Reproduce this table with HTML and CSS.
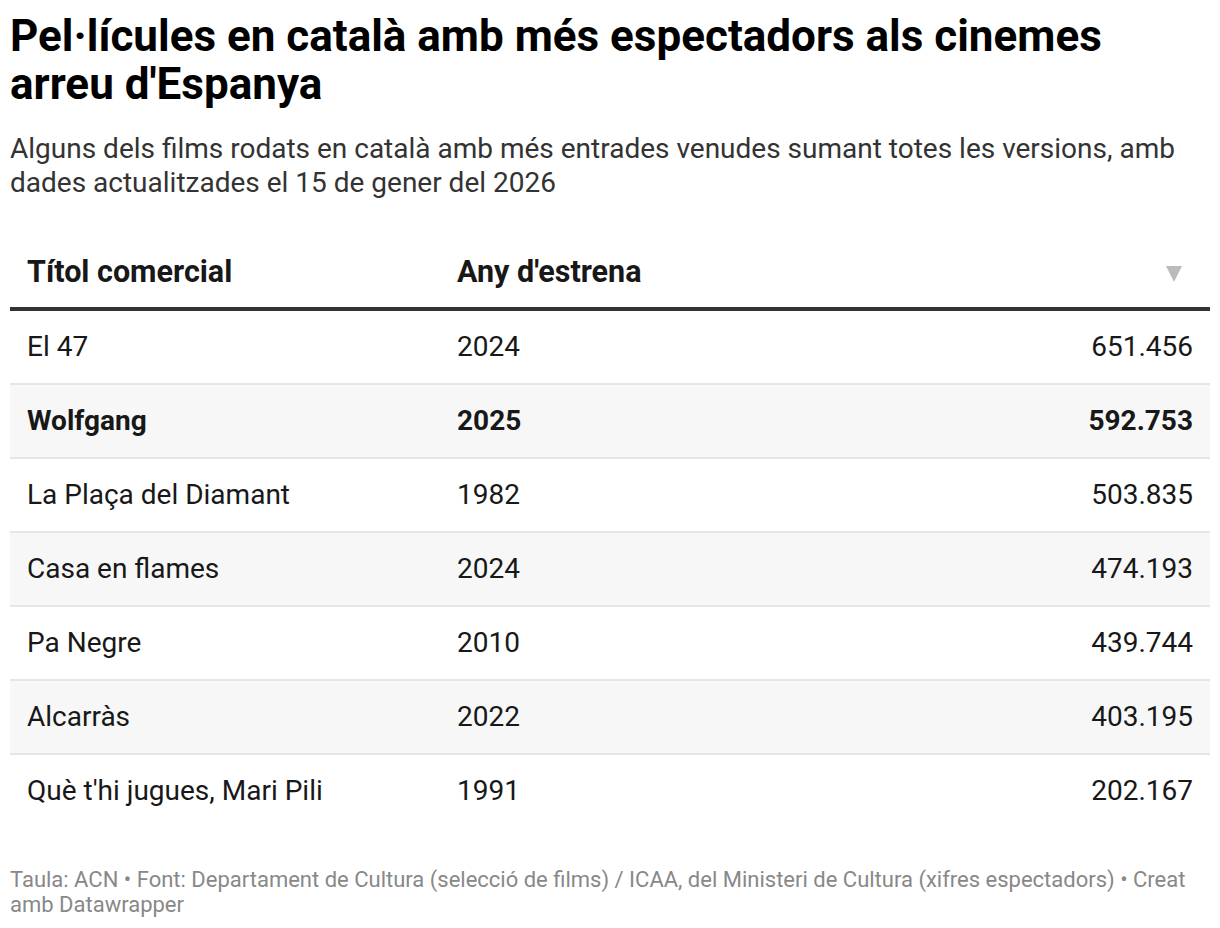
FILE: index.html
```html
<!DOCTYPE html>
<html lang="ca">
<head>
<meta charset="utf-8">
<title>Pel·lícules en català</title>
<link rel="stylesheet" href="styles.css">
</head>
<body>
<div class="chart">
  <h1 class="title">Pel·lícules en català amb més espectadors als cinemes arreu d'Espanya</h1>
  <p class="desc">Alguns dels films rodats en català amb més entrades venudes sumant totes les versions, amb dades actualitzades el 15 de gener del 2026</p>
  <table class="tbl">
    <colgroup>
      <col class="c1"><col class="c2"><col class="c3">
    </colgroup>
    <thead>
      <tr>
        <th>Títol comercial</th>
        <th>Any d'estrena</th>
        <th class="num"><span class="sort"></span></th>
      </tr>
    </thead>
    <tbody>
      <tr><td>El 47</td><td>2024</td><td class="num">651.456</td></tr>
      <tr class="hl"><td>Wolfgang</td><td>2025</td><td class="num">592.753</td></tr>
      <tr><td>La Plaça del Diamant</td><td>1982</td><td class="num">503.835</td></tr>
      <tr><td>Casa en flames</td><td>2024</td><td class="num">474.193</td></tr>
      <tr><td>Pa Negre</td><td>2010</td><td class="num">439.744</td></tr>
      <tr><td>Alcarràs</td><td>2022</td><td class="num">403.195</td></tr>
      <tr><td>Què t'hi jugues, Mari Pili</td><td>1991</td><td class="num">202.167</td></tr>
    </tbody>
  </table>
  <p class="foot">Taula: ACN • Font: Departament de Cultura (selecció de films) / ICAA, del Ministeri de Cultura (xifres espectadors) • Creat amb Datawrapper</p>
</div>
</body>
</html>
```

FILE: styles.css
```css
html, body {
  margin: 0;
  padding: 0;
  background: #fff;
}

body {
  font-family: Roboto, "Liberation Sans", sans-serif;
  color: #181818;
}

.chart {
  padding: 12px 10px 0 10px;
}

.title {
  margin: 0;
  font-size: 44px;
  line-height: 48px;
  font-weight: 700;
  color: #000;
}

.desc {
  margin: 24px 0 0 0;
  font-size: 28px;
  line-height: 34px;
  color: #333;
}

.tbl {
  width: 100%;
  margin-top: 38px;
  border-collapse: collapse;
  table-layout: fixed;
  font-size: 28px;
}

.c1 { width: 430px; }
.c2 { width: 430px; }

.tbl th {
  text-align: left;
  font-weight: 700;
  font-size: 30.5px;
  line-height: 34px;
  padding: 17px 17px 18px 17px;
  border-bottom: 4px solid #333;
}

.tbl td {
  padding: 21px 17px;
  line-height: 30px;
  border-bottom: 2px solid #e6e6e6;
}

.tbl tbody tr:nth-child(even) td {
  background: #f7f7f7;
}

.tbl tbody tr:last-child td {
  border-bottom: none;
}

.tbl .num {
  text-align: right;
}

.tbl th.num {
  padding-right: 28px;
}

.hl td {
  font-weight: 700;
}

.sort {
  display: inline-block;
  width: 0;
  height: 0;
  border-left: 8px solid transparent;
  border-right: 8px solid transparent;
  border-top: 16px solid #bbb;
  vertical-align: middle;
}

.foot {
  margin: 40px 0 0 0;
  font-size: 22px;
  line-height: 25px;
  color: #888;
}
```
